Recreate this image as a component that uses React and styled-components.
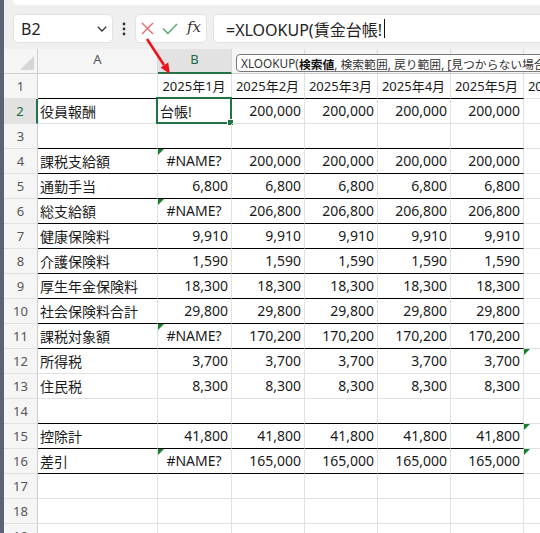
import React from 'react'
import styled, { createGlobalStyle } from 'styled-components'

const GlobalStyle = createGlobalStyle`
    html, body {
        margin: 0;
        padding: 0;
    }
    body {
        background: #efefef;
        font-family: "Noto Sans", "Noto Sans CJK JP", sans-serif;
        overflow: hidden;
    }
`

const Frame = styled.div`
    position: relative;
    display: flex;
    width: 540px;
    height: 533px;
    overflow: hidden;
`

const WindowEdge = styled.div`
    flex: none;
    width: 4px;
    background: #5c6175;
`

const Main = styled.div`
    flex: 1;
    min-width: 0;
    display: flex;
    flex-direction: column;
    overflow: hidden;

    & > * {
        flex: none;
    }
`

const RibbonEdge = styled.div`
    height: 5px;
    margin-left: 9px;
    background: #ffffff;
    border-radius: 0 0 0 6px;
`

const FormulaBar = styled.div`
    display: flex;
    align-items: stretch;
    height: 29px;
    margin: 9px -20px 6px 9px;
`

const Box = styled.div`
    box-sizing: border-box;
    background: #ffffff;
    border: 1px solid #e2e2e2;
    border-radius: 5px;
    display: flex;
    align-items: center;
`

const NameBox = styled(Box)`
    width: 100px;
    padding: 0 5px 0 7px;
    justify-content: space-between;
    font-size: 16px;
    color: #222;
`

const Dots = styled.div`
    width: 22px;
    display: flex;
    align-items: center;
    justify-content: center;
`

const ButtonGroup = styled(Box)`
    width: 72px;
    padding: 0 5px;
    justify-content: space-between;
`

const Fx = styled.span`
    font-family: "DejaVu Serif", "Liberation Serif", serif;
    font-style: italic;
    font-size: 15px;
    color: #333;
    line-height: 1;
    padding-bottom: 2px;
`

const FormulaInput = styled(Box)`
    flex: 1;
    margin-left: 6px;
    padding-left: 12px;
    font-size: 16px;
    color: #222;
`

const Caret = styled.span`
    display: inline-block;
    width: 0;
    height: 19px;
    margin-left: 2px;
    border-left: 1.5px solid #111;
`

const Sheet = styled.div`
    display: grid;
    grid-template-columns: 34px 120px 74px repeat(5, 73px);
    grid-auto-rows: 25px;
    background: #ffffff;
`

const HeadCell = styled.div`
    box-sizing: border-box;
    display: flex;
    align-items: center;
    justify-content: center;
    background: ${p => (p.$active ? '#e2e2e2' : '#f5f5f5')};
    color: ${p => (p.$active ? '#1d6b3f' : '#555')};
    font-family: "Noto Sans", sans-serif;
    font-size: 13px;
    border-right: 1px solid #dadada;
    border-bottom: ${p => (p.$active ? '2px solid #217346' : '1px solid #cfcfcf')};
    padding-bottom: ${p => (p.$active ? '3px' : '4px')};
`

const Corner = styled(HeadCell)`
    position: relative;
    border-right: 1px solid #cfcfcf;
`

const CornerMark = styled.div`
    position: absolute;
    right: 3px;
    bottom: 3px;
    width: 0;
    height: 0;
    border-left: 14px solid transparent;
    border-bottom: 14px solid #d6d6d6;
`

const RowHead = styled.div`
    box-sizing: border-box;
    display: flex;
    align-items: center;
    justify-content: center;
    background: ${p => (p.$active ? '#e2e2e2' : '#f5f5f5')};
    color: ${p => (p.$active ? '#1d6b3f' : '#555')};
    font-size: 13px;
    border-right: ${p => (p.$active ? '2px solid #217346' : '1px solid #cfcfcf')};
    border-bottom: 1px solid #e0e0e0;
`

const Cell = styled.div`
    position: relative;
    box-sizing: border-box;
    display: flex;
    align-items: center;
    justify-content: ${p =>
        p.$align === 'right' ? 'flex-end' : p.$align === 'center' ? 'center' : 'flex-start'};
    padding: 0 3px 1px 2px;
    font-size: ${p => (p.$small ? '13px' : '14px')};
    color: #1a1a1a;
    white-space: nowrap;
    border-right: 1px solid #e1e1e1;
    border-bottom: 1px solid ${p => (p.$line ? '#000000' : '#e1e1e1')};
`

const ErrorMark = styled.span`
    position: absolute;
    top: 0;
    left: 0;
    width: 0;
    height: 0;
    border-top: 6px solid #16802b;
    border-right: 6px solid transparent;
`

const Selection = styled.span`
    position: absolute;
    top: -2px;
    left: -2px;
    right: -1px;
    bottom: -1px;
    border: 2px solid #217346;
    pointer-events: none;
`

const FillHandle = styled.span`
    position: absolute;
    right: -4px;
    bottom: -4px;
    width: 5px;
    height: 5px;
    background: #217346;
    border: 1px solid #ffffff;
`

const Tooltip = styled.div`
    position: absolute;
    left: 236px;
    top: 54px;
    height: 18px;
    box-sizing: border-box;
    padding: 0 4px;
    display: flex;
    align-items: center;
    background: #ffffff;
    border: 1px solid #7a7a7a;
    border-radius: 4px;
    font-size: 11.8px;
    color: #333;
    white-space: nowrap;

    b {
        font-weight: 700;
        color: #111;
    }
`

const ArrowLayer = styled.svg`
    position: absolute;
    left: 0;
    top: 0;
    pointer-events: none;
`

const columns = ['A', 'B', 'C', 'D', 'E', 'F', 'G']
const months = ['2025年1月', '2025年2月', '2025年3月', '2025年4月', '2025年5月', '2025年6月']

const rows = [
    { n: 1, header: true, line: true },
    { n: 2, label: '役員報酬', b: '台帳!', v: '200,000', selected: true },
    { n: 3, line: true },
    { n: 4, label: '課税支給額', b: '#NAME?', v: '200,000', line: true },
    { n: 5, label: '通勤手当', b: '6,800', v: '6,800', line: true },
    { n: 6, label: '総支給額', b: '#NAME?', v: '206,800', line: true },
    { n: 7, label: '健康保険料', b: '9,910', v: '9,910', line: true },
    { n: 8, label: '介護保険料', b: '1,590', v: '1,590', line: true },
    { n: 9, label: '厚生年金保険料', b: '18,300', v: '18,300', line: true },
    { n: 10, label: '社会保険料合計', b: '29,800', v: '29,800', line: true },
    { n: 11, label: '課税対象額', b: '#NAME?', v: '170,200', line: true },
    { n: 12, label: '所得税', b: '3,700', v: '3,700', gMark: true },
    { n: 13, label: '住民税', b: '8,300', v: '8,300' },
    { n: 14, line: true },
    { n: 15, label: '控除計', b: '41,800', v: '41,800', line: true, gMark: true },
    { n: 16, label: '差引', b: '#NAME?', v: '165,000', line: true, gMark: true },
    { n: 17 },
    { n: 18 },
    { n: 19 },
]

const CrossIcon = () => (
    <svg width="13" height="13" viewBox="0 0 13 13">
        <path d="M1 1 L12 12 M12 1 L1 12" stroke="#e46a6a" strokeWidth="1.4" fill="none" />
    </svg>
)

const CheckIcon = () => (
    <svg width="16" height="12" viewBox="0 0 16 12">
        <path d="M1 5.5 L5.8 10.5 L15 1" stroke="#58a86a" strokeWidth="1.5" fill="none" />
    </svg>
)

const Chevron = () => (
    <svg width="10" height="6" viewBox="0 0 10 6">
        <path d="M0.8 0.8 L5 5 L9.2 0.8" stroke="#333" strokeWidth="1.3" fill="none" />
    </svg>
)

const VerticalDots = () => (
    <svg width="4" height="14" viewBox="0 0 4 14">
        <circle cx="2" cy="2" r="1.4" fill="#333" />
        <circle cx="2" cy="7" r="1.4" fill="#333" />
        <circle cx="2" cy="12" r="1.4" fill="#333" />
    </svg>
)

const SheetRow = ({ row }) => {
    if (row.header) {
        return (
            <>
                <RowHead>{row.n}</RowHead>
                <Cell $line />
                {months.map((m, i) => (
                    <Cell key={m} $align="center" $small $line={i < 5}>
                        {m}
                    </Cell>
                ))}
            </>
        )
    }
    const isError = row.b === '#NAME?'
    return (
        <>
            <RowHead $active={row.selected}>{row.n}</RowHead>
            <Cell $line={row.line}>{row.label}</Cell>
            <Cell $line={row.line} $align={row.selected ? 'left' : isError ? 'center' : 'right'}>
                {isError && <ErrorMark />}
                {row.b}
                {row.selected && (
                    <Selection>
                        <FillHandle />
                    </Selection>
                )}
            </Cell>
            {[0, 1, 2, 3].map(i => (
                <Cell key={i} $line={row.line} $align="right">
                    {row.v}
                </Cell>
            ))}
            <Cell>{row.gMark && <ErrorMark />}</Cell>
        </>
    )
}

const App = () => {
    return (
        <Frame>
            <GlobalStyle />
            <WindowEdge />
            <Main>
                <RibbonEdge />
                <FormulaBar>
                    <NameBox>
                        <span>B2</span>
                        <Chevron />
                    </NameBox>
                    <Dots>
                        <VerticalDots />
                    </Dots>
                    <ButtonGroup>
                        <CrossIcon />
                        <CheckIcon />
                        <Fx>fx</Fx>
                    </ButtonGroup>
                    <FormulaInput>
                        =XLOOKUP(賃金台帳!
                        <Caret />
                    </FormulaInput>
                </FormulaBar>
                <Sheet>
                    <Corner>
                        <CornerMark />
                    </Corner>
                    {columns.map(c => (
                        <HeadCell key={c} $active={c === 'B'}>
                            {c}
                        </HeadCell>
                    ))}
                    {rows.map(r => (
                        <SheetRow key={r.n} row={r} />
                    ))}
                </Sheet>
            </Main>
            <Tooltip>
                XLOOKUP(<b>検索値</b>, 検索範囲, 戻り範囲, [見つからない場合], [一致モード], [検索モード])
            </Tooltip>
            <ArrowLayer width="540" height="533">
                <line x1="147" y1="39" x2="164" y2="65" stroke="#e8161c" strokeWidth="2.6" />
                <polygon points="170,74 160.6,67.6 168.2,62.6" fill="#e8161c" />
            </ArrowLayer>
        </Frame>
    )
}

export default App
